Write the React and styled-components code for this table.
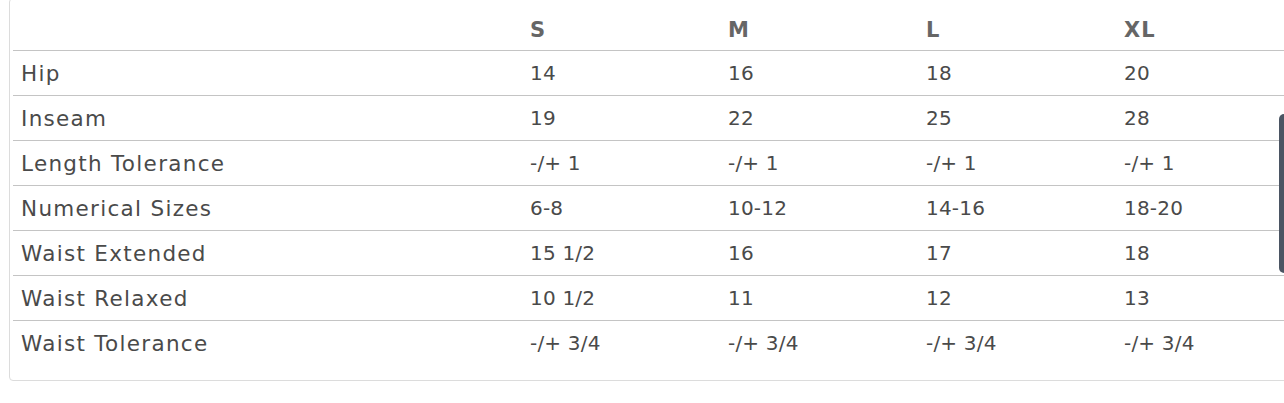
import React from "react";
import styled, { createGlobalStyle } from "styled-components";

const GlobalStyle = createGlobalStyle`
  html, body {
    margin: 0;
    padding: 0;
    background: #fff;
    overflow: hidden;
  }
  body {
    font-family: "DejaVu Sans", "Noto Sans", sans-serif;
  }
`;

const sizes = ["S", "M", "L", "XL"];

const rows = [
  { label: "Hip", values: ["14", "16", "18", "20"] },
  { label: "Inseam", values: ["19", "22", "25", "28"] },
  { label: "Length Tolerance", values: ["-/+ 1", "-/+ 1", "-/+ 1", "-/+ 1"] },
  { label: "Numerical Sizes", values: ["6-8", "10-12", "14-16", "18-20"] },
  { label: "Waist Extended", values: ["15 1/2", "16", "17", "18"] },
  { label: "Waist Relaxed", values: ["10 1/2", "11", "12", "13"] },
  { label: "Waist Tolerance", values: ["-/+ 3/4", "-/+ 3/4", "-/+ 3/4", "-/+ 3/4"] },
];

const Page = styled.div`
  position: relative;
  width: 1284px;
  height: 403px;
  overflow: hidden;
`;

const Card = styled.div`
  margin: -2px 0 0 9px;
  width: 1340px;
  border: 1px solid #dcdcdc;
  border-radius: 4px;
  padding: 0 0 15px 3px;
  box-sizing: border-box;
`;

const Table = styled.table`
  border-collapse: collapse;
  width: 1301px;
  table-layout: fixed;
  color: #4a4a4a;
  font-size: 21px;
  letter-spacing: 1.1px;
`;

const HeadCell = styled.th`
  height: 43px;
  padding: 0 8px 8px;
  vertical-align: bottom;
  text-align: left;
  font-weight: 600;
  color: #666;
  width: ${(p) => (p.$wide ? "493px" : "182px")};
`;

const Row = styled.tr`
  border-top: 1px solid #c4c4c4;
`;

const Cell = styled.td`
  height: 44px;
  padding: 0 8px;
  vertical-align: middle;
  white-space: nowrap;
  letter-spacing: ${(p) => (p.$label ? "1.3px" : "0.2px")};
  font-size: ${(p) => (p.$label ? "21.5px" : "20px")};
`;

const Scrollbar = styled.div`
  position: absolute;
  right: 0;
  top: 114px;
  width: 5px;
  height: 159px;
  background: #4b5563;
  border-radius: 5px 0 0 5px;
`;

export default function App() {
  return (
    <Page>
      <GlobalStyle />
      <Card>
        <Table>
          <thead>
            <tr>
              <HeadCell $wide />
              {sizes.map((s) => (
                <HeadCell key={s}>{s}</HeadCell>
              ))}
            </tr>
          </thead>
          <tbody>
            {rows.map((r) => (
              <Row key={r.label}>
                <Cell $label>{r.label}</Cell>
                {r.values.map((v, i) => (
                  <Cell key={i}>{v}</Cell>
                ))}
              </Row>
            ))}
          </tbody>
        </Table>
      </Card>
      <Scrollbar />
    </Page>
  );
}
